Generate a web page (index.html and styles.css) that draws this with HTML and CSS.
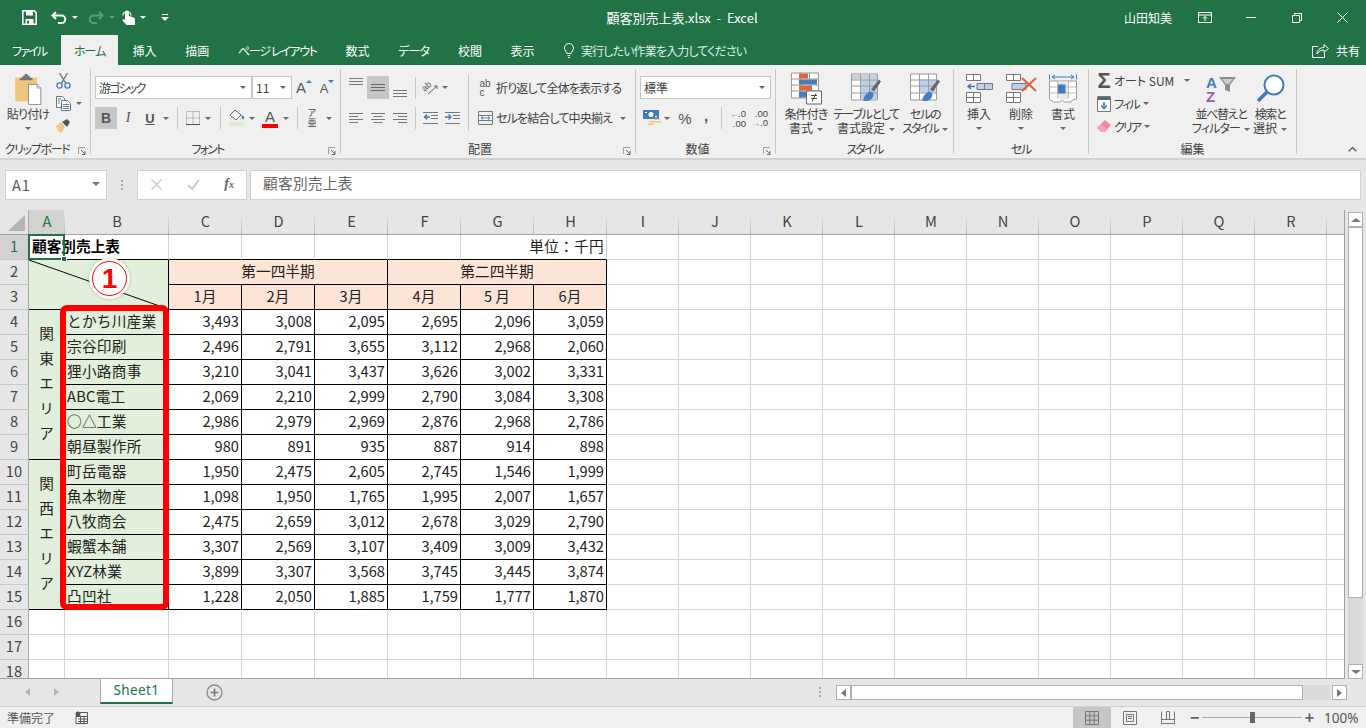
FILE: index.html
```html
<!DOCTYPE html>
<html lang="ja">
<head>
<meta charset="utf-8">
<title>顧客別売上表.xlsx - Excel</title>
<link rel="stylesheet" href="styles.css">
</head>
<body>
<div class="app">
<header class="titlebar">
  <div class="qat">
    <svg class="q-save" width="15" height="15" viewBox="0 0 15 15"><path d="M.8.8h11.4l2 2v11.4H.8z" fill="none" stroke="#fff" stroke-width="1.6"/><path d="M4 1h7v4.5H4zM3.5 9h8v5h-8z" fill="#fff"/><path d="M5 10.5h2v3H5z" fill="#217346"/></svg>
    <svg class="q-undo" width="16" height="14" viewBox="0 0 16 14"><path d="M5 1 1.5 4.5 5 8M2 4.5h8.500a3.800 3.800 0 0 1 0 7.600H7" fill="none" stroke="#fff" stroke-width="2"/></svg>
    <span class="cr-w q-c1"></span>
    <svg class="q-redo" width="16" height="14" viewBox="0 0 16 14"><path d="M11 1l3.500 3.500L11 8M14 4.500H5.500a3.800 3.800 0 0 0 0 7.600H9" fill="none" stroke="#5f9c7e" stroke-width="2"/></svg>
    <span class="cr-d q-c2"></span>
    <svg class="q-touch" width="16" height="17" viewBox="0 0 16 17"><path d="M5 7V3.500a2 2 0 0 1 4 0V7l4 1.200c1.500.5 2 1.200 2 2.300V16H6.500L2.500 11.500 3.500 10 5 11z" fill="#fff"/><path d="M3 6.500a4 4 0 1 1 8 0" fill="none" stroke="#fff" stroke-width="1.200"/></svg>
    <span class="cr-w q-c3"></span>
    <svg class="q-more" width="8" height="7" viewBox="0 0 8 7"><path d="M1 0h6v1H1zM0 3h8L4 7z" fill="#fff"/></svg>
  </div>
  <div class="doc-title">顧客別売上表.xlsx  -  Excel</div>
  <div class="win">
    <span class="user">山田知美</span>
    <svg class="w-disp" width="14" height="11" viewBox="0 0 14 11"><path d="M.5.500h13v10H.5zM.5 3h13" fill="none" stroke="#fff"/><path d="M7 9V4.500M5 6.500l2-2 2 2" fill="none" stroke="#fff"/></svg>
    <svg class="w-min" width="10" height="1" viewBox="0 0 10 1"><path d="M0 0h10v1H0z" fill="#fff"/></svg>
    <svg class="w-max" width="10" height="10" viewBox="0 0 10 10"><path d="M.5 2.500h7v7h-7zM2.500 2.500v-2h7v7h-2" fill="none" stroke="#fff"/></svg>
    <svg class="w-close" width="11" height="11" viewBox="0 0 11 11"><path d="M.5.500l10 10M10.500.500l-10 10" stroke="#fff" fill="none"/></svg>
  </div>
</header>

<nav class="tabs">
  <span class="tab first sp3">ファイル</span>
  <span class="tab on sp1">ホーム</span>
  <span class="tab">挿入</span>
  <span class="tab">描画</span>
  <span class="tab sp2">ページ レイアウト</span>
  <span class="tab">数式</span>
  <span class="tab sp1">データ</span>
  <span class="tab">校閲</span>
  <span class="tab">表示</span>
  <span class="tell">
    <svg width="10" height="15" viewBox="0 0 10 15"><path d="M3 10.500C2.500 8.500.5 7.500.5 5a4.500 4.500 0 0 1 9 0c0 2.500-2 3.500-2.500 5.500zM3.500 12.500h3M4 14.500h2" fill="none" stroke="#fff"/></svg>
    <span class="sp1">実行したい作業を入力してください</span>
  </span>
  <span class="share">
    <svg width="17" height="15" viewBox="0 0 17 15"><path d="M6 3.500H.5v11h12V10M5 11c0-4 3-6.500 7-6.500V1.500l4.500 4-4.500 4V7c-3 0-5 1-7 4z" fill="none" stroke="#fff"/></svg>
    <span>共有</span>
  </span>
</nav>

<section class="ribbon">
  <!-- clipboard -->
  <div class="g g-clip">
    <div class="g-body">
      <div class="big b-paste">
        <svg class="ico" width="30" height="36" viewBox="0 0 30 36"><path d="M1 6h24v26H1z" fill="#efc680"/><path d="M9 4h2a2 2 0 0 1 4 0h2v2l3 1v2H6V7l3-1z" fill="#767676"/><path d="M15.500 13.500H25l4 4v18H15.500z" fill="#fff" stroke="#8a8a8a"/><path d="M25 13.500v4h4" fill="none" stroke="#8a8a8a"/></svg>
        <span class="t sp1">貼り付け</span>
        <span class="cr"></span>
      </div>
      <div class="stack s-clip">
        <div class="srow"><span class="slot w20"><svg width="15" height="16" viewBox="0 0 15 16"><path d="M3.500 0l6 10M11.500 0l-6 10" stroke="#777" stroke-width="1.400" fill="none"/><circle cx="3.500" cy="12.500" r="2.600" fill="none" stroke="#3f7cbf" stroke-width="1.300"/><circle cx="11.500" cy="12.500" r="2.600" fill="none" stroke="#3f7cbf" stroke-width="1.300"/></svg></span></div>
        <div class="srow"><span class="slot w20"><svg width="15" height="15" viewBox="0 0 15 15"><path d="M.5.500h6l2 2v9H.5z" fill="#fff" stroke="#777"/><path d="M5.500 4.500h6l3 3v7h-9z" fill="#fff" stroke="#4a7ebb"/><path d="M7 8.500h6M7 10.500h6M7 12.500h6M2 3h3M2 5h2M2 7h2" stroke="#777" fill="none"/></svg></span><span class="slot w12 cr"></span></div>
        <div class="srow"><span class="slot w20"><svg width="16" height="15" viewBox="0 0 16 15"><path d="M0 8l6-5 4 5-4 6-2-1 1-2-2 1-1-1 1-2z" fill="#efc680"/><path d="M7 3l5-3 3 3-3 5z" fill="#555"/></svg></span></div>
      </div>
    </div>
    <div class="g-label lb sp2">クリップボード</div>
    <svg class="launch" width="8" height="8" viewBox="0 0 8 8"><path d="M.5 7V.5H7" fill="none" stroke="#a0a0a0"/><path d="M3 3l4 4M7 4v3.500H4" fill="none" stroke="#666"/></svg>
  </div>

  <!-- font -->
  <div class="g g-font">
    <div class="g-col pl4">
      <div class="row r1">
        <div class="sel s-face"><span class="grow sp3">游ゴシック</span><span class="slot w16 cr"></span></div>
        <div class="sel s-size"><span class="grow">11</span><span class="slot w16 cr"></span></div>
        <span class="slot w24 gl"><span class="aa aa-big">A</span><i class="tri up"></i></span>
        <span class="slot w22 gl"><span class="aa aa-sm">A</span><i class="tri dn"></i></span>
      </div>
      <div class="row r2">
        <span class="slot w22 act"><b class="gl-b">B</b></span>
        <span class="slot w22"><i class="gl-i">I</i></span>
        <span class="slot w22"><u class="gl-u">U</u></span>
        <span class="slot w10 cr"></span>
        <span class="slot w12"><i class="vs"></i></span>
        <span class="slot w20"><svg width="14" height="14" viewBox="0 0 14 14"><path d="M.5.500h13v13H.5zM7 .5v13M.5 7h13" fill="none" stroke="#888" stroke-dasharray="1 1"/><path d="M0 13.500h14" stroke="#555"/></svg></span>
        <span class="slot w10 cr"></span>
        <span class="slot w14"><i class="vs"></i></span>
        <span class="slot w20"><svg width="16" height="18" viewBox="0 0 16 18"><path d="M6 1l6 5-5 5-6-5z" fill="#fff" stroke="#666"/><path d="M12 6l3 1.500V10h-1.500z" fill="#3f7cbf"/><path d="M0 13h15v4H0z" fill="#dcebd2"/></svg></span>
        <span class="slot w10 cr"></span>
        <span class="slot w26 fcolor"><span class="fa">A</span><i class="fbar"></i></span>
        <span class="slot w6 cr"></span>
        <span class="slot w16"><i class="vs"></i></span>
        <span class="slot w14 phon">ア<br>亜</span>
        <span class="slot w20 cr"></span>
      </div>
    </div>
    <div class="g-label lb sp3">フォント</div>
    <svg class="launch" width="8" height="8" viewBox="0 0 8 8"><path d="M.5 7V.5H7" fill="none" stroke="#a0a0a0"/><path d="M3 3l4 4M7 4v3.500H4" fill="none" stroke="#666"/></svg>
  </div>

  <!-- alignment -->
  <div class="g g-align">
    <div class="g-body">
      <div class="g-col pl4 c-al">
        <div class="row r1b">
          <span class="slot w22 al-top"><svg width="14" height="7" viewBox="0 0 14 7"><path d="M0 .5h14M0 3.500h14M0 6.500h14" stroke="#777"/></svg></span>
          <span class="slot w22 act"><svg width="14" height="7" viewBox="0 0 14 7"><path d="M0 .5h14M0 3.500h14M0 6.500h14" stroke="#666"/></svg></span>
          <span class="slot w22 al-bot"><svg width="14" height="7" viewBox="0 0 14 7"><path d="M0 .5h14M0 3.500h14M0 6.500h14" stroke="#777"/></svg></span>
          <span class="slot w8"><i class="vs"></i></span>
          <span class="slot w22"><svg class="ov" width="17" height="15" viewBox="0 0 17 15"><text x="0" y="9" class="orient" transform="rotate(-40 5 7)">ab</text><path d="M6 14l9-8M15 6h-3M15 6v3" fill="none" stroke="#666"/></svg></span>
          <span class="slot w8 cr"></span>
        </div>
        <div class="row r2b">
          <span class="slot w22"><svg width="14" height="11" viewBox="0 0 14 11"><path d="M0 .5h14M0 3.500h9M0 6.500h14M0 9.500h9" stroke="#777"/></svg></span>
          <span class="slot w22"><svg width="14" height="11" viewBox="0 0 14 11"><path d="M0 .5h14M2.500 3.500h9M0 6.500h14M2.500 9.500h9" stroke="#777"/></svg></span>
          <span class="slot w22"><svg width="14" height="11" viewBox="0 0 14 11"><path d="M0 .5h14M5 3.500h9M0 6.500h14M5 9.500h9" stroke="#777"/></svg></span>
          <span class="slot w8"><i class="vs"></i></span>
          <span class="slot w22"><svg width="15" height="12" viewBox="0 0 15 12"><path d="M0 .5h15M8 3.500h7M8 6.500h7M0 11.500h15" stroke="#777"/><path d="M7 5H1M4 2.500L1.500 5 4 7.500" fill="none" stroke="#3f7cbf" stroke-width="1.300"/></svg></span>
          <span class="slot w22"><svg width="15" height="12" viewBox="0 0 15 12"><path d="M0 .5h15M8 3.500h7M8 6.500h7M0 11.500h15" stroke="#777"/><path d="M0 5h6M3.500 2.500L6 5 3.500 7.500" fill="none" stroke="#3f7cbf" stroke-width="1.300"/></svg></span>
        </div>
      </div>
      <i class="vsl"></i>
      <div class="g-col c-wrap">
        <div class="row r1b">
          <span class="slot w22"><span class="wrapic">ab<br>c</span></span>
          <span class="t sp1">折り返して全体を表示する</span>
        </div>
        <div class="row r2b">
          <span class="slot w22"><svg width="15" height="14" viewBox="0 0 15 14"><path d="M.5.500h14v13H.5zM.5 4.500h14M.5 9.500h14" fill="none" stroke="#777"/><path d="M.5 4.500h14v5H.5z" fill="#fff" stroke="#777"/><path d="M3 7h9M5 5.500L3 7l2 1.500M10 5.500L12 7l-2 1.500" fill="none" stroke="#3f7cbf"/></svg></span>
          <span class="t sp1">セルを結合して中央揃え</span>
          <span class="slot w22 cr"></span>
        </div>
      </div>
    </div>
    <div class="g-label lb">配置</div>
    <svg class="launch" width="8" height="8" viewBox="0 0 8 8"><path d="M.5 7V.5H7" fill="none" stroke="#a0a0a0"/><path d="M3 3l4 4M7 4v3.500H4" fill="none" stroke="#666"/></svg>
  </div>

  <!-- number -->
  <div class="g g-num">
    <div class="g-col pl4">
      <div class="row r1"><div class="sel s-fmt"><span class="grow">標準</span><span class="slot w16 cr"></span></div></div>
      <div class="row r2">
        <span class="slot w24"><svg width="18" height="16" viewBox="0 0 18 16"><path d="M0 0h16v9H0z" fill="#3f7cbf"/><circle cx="8" cy="4.500" r="2.500" fill="#fff"/><path d="M2 2h2v1H2zM12 6h2v1h-2z" fill="#fff"/><path d="M6 11h6v1.500H6zM5 13.500h6V15H5zM11 8.500h6V10h-6zM12 11h6v1.500h-6z" fill="#efc680"/></svg></span>
        <span class="slot w6 cr"></span>
        <span class="slot w30 pct">%</span>
        <span class="slot w12 cm">,</span>
        <span class="slot w18"><i class="vs"></i></span>
        <span class="slot w16 dec"><span><i class="arr">←</i>.0</span><span>.00</span></span>
        <span class="slot w22 dec"><span>.00</span><span><i class="arr">→</i>.0</span></span>
      </div>
    </div>
    <div class="g-label lb">数値</div>
    <svg class="launch" width="8" height="8" viewBox="0 0 8 8"><path d="M.5 7V.5H7" fill="none" stroke="#a0a0a0"/><path d="M3 3l4 4M7 4v3.500H4" fill="none" stroke="#666"/></svg>
  </div>

  <!-- styles -->
  <div class="g g-style">
    <div class="g-body">
      <div class="big w60">
        <svg class="ico" width="31" height="32" viewBox="0 0 31 32"><path d="M.5.500h27v25H.5zM9.500.500v25M18.500.500v25M.5 6.500h27M.5 12.500h27M.5 18.500h27" fill="#fff" stroke="#9a9a9a"/><path d="M8 1h9v5H8z" fill="#e0643c"/><path d="M8 7h18v5H8z" fill="#4a7ebb"/><path d="M8 13h13v5H8z" fill="#e0643c"/><path d="M8 19h9v6H8z" fill="#4a7ebb"/><path d="M15.500 18.500h15v13h-15z" fill="#fff" stroke="#666"/><path d="M20 23h6M20 26h6M25 21l-4 8" stroke="#444" fill="none"/></svg>
        <span class="t sp1">条件付き</span>
        <span class="t">書式<i class="cr il"></i></span>
      </div>
      <div class="big w60">
        <svg class="ico" width="30" height="32" viewBox="0 0 30 32"><path d="M.5 1.500h26v26H.5z" fill="#fff" stroke="#9a9a9a"/><path d="M1 2h25v5H1z" fill="#c7d2df"/><path d="M9 7h17v20H9z" fill="#bcd0e8"/><path d="M.5 7.500h26M.5 13.500h26M.5 20.500h26M9.500 1.500v26M18.500 1.500v26" stroke="#9a9a9a" fill="none"/><path d="M20 17l8-10 2 2-7 10z" fill="#666"/><path d="M12 28c1-5 5-9 8-9 3 1 3 4 1 7-3 3-6 3-9 2z" fill="#4a7ebb"/></svg>
        <span class="t sp2">テーブルとして</span>
        <span class="t">書式設定<i class="cr il"></i></span>
      </div>
      <div class="big w58">
        <svg class="ico" width="30" height="32" viewBox="0 0 30 32"><path d="M.5 1.500h26v26H.5z" fill="#fff" stroke="#9a9a9a"/><path d="M9 7h17v13H9z" fill="#bcd0e8"/><path d="M.5 7.500h26M.5 13.500h26M.5 20.500h26M9.500 1.500v26M18.500 1.500v26" stroke="#9a9a9a" fill="none"/><path d="M20 17l8-10 2 2-7 10z" fill="#666"/><path d="M12 28c1-5 5-9 8-9 3 1 3 4 1 7-3 3-6 3-9 2z" fill="#4a7ebb"/></svg>
        <span class="t sp2">セルの</span>
        <span class="t sp3">スタイル<i class="cr il"></i></span>
      </div>
    </div>
    <div class="g-label sp3">スタイル</div>
  </div>

  <!-- cells -->
  <div class="g g-cell">
    <div class="g-body pl4">
      <div class="big w42">
        <svg class="ico" width="27" height="29" viewBox="0 0 27 29"><path d="M.5.500h14v6H.5zM7.500.500v6M.5 18.500h14v10H.5zM7.500 18.500v10M.5 23.500h14" fill="#fff" stroke="#777"/><path d="M11 9.500h15.500v6H11zM18.500 9.500v6" fill="#bcd0e8" stroke="#777"/><path d="M9 12.500H2M5 10L2 12.500 5 15" fill="none" stroke="#3f7cbf" stroke-width="1.500"/></svg>
        <span class="t">挿入</span>
        <span class="cr mt6"></span>
      </div>
      <div class="big w42">
        <svg class="ico" width="31" height="29" viewBox="0 0 31 29"><path d="M.5.500h14v6H.5zM7.500.500v6M.5 18.500h14v10H.5zM7.500 18.500v10M.5 23.500h14" fill="#fff" stroke="#777"/><path d="M6 9.500h14v6H6z" fill="#bcd0e8" stroke="#777"/><path d="M16 4l14 13M30 4L16 17" stroke="#e0643c" stroke-width="2.200" fill="none"/></svg>
        <span class="t">削除</span>
        <span class="cr mt6"></span>
      </div>
      <div class="big w42">
        <svg class="ico" width="28" height="30" viewBox="0 0 28 30"><path d="M.5 1v5M27.500 1v5M3 3.500h22M6 1.500l-3 2 3 2M22 1.500l3 2-3 2" fill="none" stroke="#3f7cbf"/><path d="M.5 7.500h27v18l-4 1-2 2h-6l-2-2-3 2h-6l-4-3z" fill="#fff" stroke="#999"/><path d="M8 8h12v18H8z" fill="#eaeaea"/><path d="M8.500 7.500v17M19.500 7.500v17M.5 13.500h27M.5 19.500h27" stroke="#bbb" fill="none"/><path d="M9 11h7.500v9H9z" fill="#3f7cbf"/></svg>
        <span class="t">書式</span>
        <span class="cr mt6"></span>
      </div>
    </div>
    <div class="g-label sp2">セル</div>
  </div>

  <!-- editing -->
  <div class="g g-edit">
    <div class="g-body">
      <div class="stack s-edit">
        <div class="srow"><span class="slot w20"><span class="sigma">Σ</span></span><span class="t">オート SUM</span><span class="slot w26 cr"></span></div>
        <div class="srow"><span class="slot w20"><svg width="14" height="16" viewBox="0 0 14 16"><path d="M.5.500h13v15H.5z" fill="#fff" stroke="#777"/><path d="M1 1h12v3H1z" fill="#666"/><path d="M7 6v6M4 9.500l3 3 3-3" fill="none" stroke="#3f7cbf" stroke-width="1.600"/></svg></span><span class="t sp3">フィル</span><span class="slot w14 cr"></span></div>
        <div class="srow"><span class="slot w20"><svg width="14" height="13" viewBox="0 0 14 13"><path d="M8 0l6 5-6 7H4L0 8z" fill="#ea8a9c"/><path d="M0 8l4-4 6 5-3 3H4z" fill="#f0a9b6"/></svg></span><span class="t sp3">クリア</span><span class="slot w14 cr"></span></div>
      </div>
      <div class="big w60">
        <svg class="ico" width="31" height="29" viewBox="0 0 31 29"><path d="M13 3h17l-6 8v7l-5-2v-5z" fill="#8d8d8d"/><path d="M16 5h11l-4 5h-3z" fill="#ccc"/><text x="0" y="14" class="az a">A</text><text x="0" y="28" class="az z">Z</text></svg>
        <span class="t sp2">並べ替えと</span>
        <span class="t sp1">フィルター<i class="cr il"></i></span>
      </div>
      <div class="big w38">
        <svg class="ico" width="29" height="29" viewBox="0 0 29 29"><circle cx="18" cy="11" r="9.500" fill="#fff" stroke="#3f7cbf" stroke-width="2"/><path d="M11 18L2 27" stroke="#3f7cbf" stroke-width="3.500"/></svg>
        <span class="t sp2">検索と</span>
        <span class="t">選択<i class="cr il"></i></span>
      </div>
    </div>
    <div class="g-label">編集</div>
  </div>
  <svg class="collapse" width="9" height="6" viewBox="0 0 9 6"><path d="M.7 5.300l3.800-3.800 3.800 3.800" fill="none" stroke="#666" stroke-width="1.500"/></svg>
</section>

<section class="fbar-row">
  <div class="namebox"><span class="grow">A1</span><svg width="8" height="4" viewBox="0 0 8 4"><path d="M0 0h8L4 4z" fill="#777"/></svg></div>
  <div class="dots"><i></i><i></i><i></i></div>
  <div class="fxbox">
    <svg width="11" height="11" viewBox="0 0 11 11"><path d="M.5.500l10 10M10.500.500l-10 10" stroke="#c8c8c8" stroke-width="1.300"/></svg>
    <svg width="13" height="11" viewBox="0 0 13 11"><path d="M1 6l4 4 7-9" fill="none" stroke="#c8c8c8" stroke-width="1.800"/></svg>
    <span class="fx">f<small>x</small></span>
  </div>
  <div class="finput">顧客別売上表</div>
</section>

<section class="sheet-row">
  <div class="sheet">
    <table class="grid">
      <colgroup>
        <col class="c-rh"><col class="c-a"><col class="c-b">
        <col class="c-d"><col class="c-d"><col class="c-d"><col class="c-d"><col class="c-d"><col class="c-d">
        <col class="c-e"><col class="c-e"><col class="c-e"><col class="c-e"><col class="c-e"><col class="c-e"><col class="c-e"><col class="c-e"><col class="c-e"><col class="c-e"><col class="c-s">
      </colgroup>
      <thead>
        <tr>
          <th class="corner"><svg width="17" height="16" viewBox="0 0 17 16"><path d="M17 0v16H0z" fill="#b4b4b4"/></svg></th>
          <th class="ch on">A</th><th class="ch">B</th><th class="ch">C</th><th class="ch">D</th><th class="ch">E</th><th class="ch">F</th><th class="ch">G</th><th class="ch">H</th><th class="ch">I</th><th class="ch">J</th><th class="ch">K</th><th class="ch">L</th><th class="ch">M</th><th class="ch">N</th><th class="ch">O</th><th class="ch">P</th><th class="ch">Q</th><th class="ch">R</th><th class="ch"></th>
        </tr>
      </thead>
      <tbody>
        <tr><th class="rh on">1</th><td colspan="2" class="kb title">顧客別売上表</td><td class="kb"></td><td class="kb"></td><td class="kb"></td><td class="kb"></td><td colspan="2" class="kb r unit">単位：千円</td><td></td><td></td><td></td><td></td><td></td><td></td><td></td><td></td><td></td><td></td><td></td></tr>
        <tr><th class="rh">2</th><td colspan="2" rowspan="2" class="k gr diag"><svg class="diagline" viewBox="0 0 140 50" preserveAspectRatio="none"><path d="M0 0L140 50" stroke="#000" fill="none"/></svg></td><td colspan="3" class="k or c">第一四半期</td><td colspan="3" class="k or c">第二四半期</td><td></td><td></td><td></td><td></td><td></td><td></td><td></td><td></td><td></td><td></td><td></td></tr>
        <tr><th class="rh">3</th><td class="k or c">1月</td><td class="k or c">2月</td><td class="k or c">3月</td><td class="k or c">4月</td><td class="k or c">5 月</td><td class="k or c">6月</td><td></td><td></td><td></td><td></td><td></td><td></td><td></td><td></td><td></td><td></td><td></td></tr>
        <tr><th class="rh">4</th><td rowspan="6" class="k gr vert"><span>関東エリア</span></td><td class="k gr">とかち川産業</td><td class="k r">3,493</td><td class="k r">3,008</td><td class="k r">2,095</td><td class="k r">2,695</td><td class="k r">2,096</td><td class="k r">3,059</td><td></td><td></td><td></td><td></td><td></td><td></td><td></td><td></td><td></td><td></td><td></td></tr>
        <tr><th class="rh">5</th><td class="k gr">宗谷印刷</td><td class="k r">2,496</td><td class="k r">2,791</td><td class="k r">3,655</td><td class="k r">3,112</td><td class="k r">2,968</td><td class="k r">2,060</td><td></td><td></td><td></td><td></td><td></td><td></td><td></td><td></td><td></td><td></td><td></td></tr>
        <tr><th class="rh">6</th><td class="k gr">狸小路商事</td><td class="k r">3,210</td><td class="k r">3,041</td><td class="k r">3,437</td><td class="k r">3,626</td><td class="k r">3,002</td><td class="k r">3,331</td><td></td><td></td><td></td><td></td><td></td><td></td><td></td><td></td><td></td><td></td><td></td></tr>
        <tr><th class="rh">7</th><td class="k gr">ABC電工</td><td class="k r">2,069</td><td class="k r">2,210</td><td class="k r">2,999</td><td class="k r">2,790</td><td class="k r">3,084</td><td class="k r">3,308</td><td></td><td></td><td></td><td></td><td></td><td></td><td></td><td></td><td></td><td></td><td></td></tr>
        <tr><th class="rh">8</th><td class="k gr">○△工業</td><td class="k r">2,986</td><td class="k r">2,979</td><td class="k r">2,969</td><td class="k r">2,876</td><td class="k r">2,968</td><td class="k r">2,786</td><td></td><td></td><td></td><td></td><td></td><td></td><td></td><td></td><td></td><td></td><td></td></tr>
        <tr><th class="rh">9</th><td class="k gr">朝昼製作所</td><td class="k r">980</td><td class="k r">891</td><td class="k r">935</td><td class="k r">887</td><td class="k r">914</td><td class="k r">898</td><td></td><td></td><td></td><td></td><td></td><td></td><td></td><td></td><td></td><td></td><td></td></tr>
        <tr><th class="rh">10</th><td rowspan="6" class="k gr vert"><span>関西エリア</span></td><td class="k gr">町岳電器</td><td class="k r">1,950</td><td class="k r">2,475</td><td class="k r">2,605</td><td class="k r">2,745</td><td class="k r">1,546</td><td class="k r">1,999</td><td></td><td></td><td></td><td></td><td></td><td></td><td></td><td></td><td></td><td></td><td></td></tr>
        <tr><th class="rh">11</th><td class="k gr">魚本物産</td><td class="k r">1,098</td><td class="k r">1,950</td><td class="k r">1,765</td><td class="k r">1,995</td><td class="k r">2,007</td><td class="k r">1,657</td><td></td><td></td><td></td><td></td><td></td><td></td><td></td><td></td><td></td><td></td><td></td></tr>
        <tr><th class="rh">12</th><td class="k gr">八牧商会</td><td class="k r">2,475</td><td class="k r">2,659</td><td class="k r">3,012</td><td class="k r">2,678</td><td class="k r">3,029</td><td class="k r">2,790</td><td></td><td></td><td></td><td></td><td></td><td></td><td></td><td></td><td></td><td></td><td></td></tr>
        <tr><th class="rh">13</th><td class="k gr">蝦蟹本舗</td><td class="k r">3,307</td><td class="k r">2,569</td><td class="k r">3,107</td><td class="k r">3,409</td><td class="k r">3,009</td><td class="k r">3,432</td><td></td><td></td><td></td><td></td><td></td><td></td><td></td><td></td><td></td><td></td><td></td></tr>
        <tr><th class="rh">14</th><td class="k gr">XYZ林業</td><td class="k r">3,899</td><td class="k r">3,307</td><td class="k r">3,568</td><td class="k r">3,745</td><td class="k r">3,445</td><td class="k r">3,874</td><td></td><td></td><td></td><td></td><td></td><td></td><td></td><td></td><td></td><td></td><td></td></tr>
        <tr><th class="rh">15</th><td class="k gr">凸凹社</td><td class="k r">1,228</td><td class="k r">2,050</td><td class="k r">1,885</td><td class="k r">1,759</td><td class="k r">1,777</td><td class="k r">1,870</td><td></td><td></td><td></td><td></td><td></td><td></td><td></td><td></td><td></td><td></td><td></td></tr>
        <tr><th class="rh">16</th><td></td><td></td><td></td><td></td><td></td><td></td><td></td><td></td><td></td><td></td><td></td><td></td><td></td><td></td><td></td><td></td><td></td><td></td><td></td></tr>
        <tr><th class="rh">17</th><td></td><td></td><td></td><td></td><td></td><td></td><td></td><td></td><td></td><td></td><td></td><td></td><td></td><td></td><td></td><td></td><td></td><td></td><td></td></tr>
        <tr><th class="rh">18</th><td></td><td></td><td></td><td></td><td></td><td></td><td></td><td></td><td></td><td></td><td></td><td></td><td></td><td></td><td></td><td></td><td></td><td></td><td></td></tr>
      </tbody>
    </table>
    <div class="selbox"><i class="handle"></i></div>
    <div class="redbox"></div>
    <div class="badge"><span>1</span></div>
  </div>
  <aside class="vscroll">
    <span class="sbtn"><i class="ar-up"></i></span>
    <span class="thumb-v"></span>
    <span class="track"></span>
    <span class="sbtn"><i class="ar-dn"></i></span>
  </aside>
</section>

<section class="sheetbar">
  <span class="nav"><i class="ar-l"></i></span>
  <span class="nav nav2"><i class="ar-r"></i></span>
  <span class="stab">Sheet1</span>
  <svg class="addsheet" width="17" height="17" viewBox="0 0 17 17"><circle cx="8.500" cy="8.500" r="7.500" fill="none" stroke="#8a8a8a" stroke-width="1.300"/><path d="M4.500 8.500h8M8.500 4.500v8" stroke="#777" stroke-width="1.600"/></svg>
  <span class="grow"></span>
  <div class="dots dots-h"><i></i><i></i><i></i></div>
  <div class="hscroll">
    <span class="sbtn"><i class="ar-l"></i></span>
    <span class="thumb-h"></span>
    <span class="track"></span>
    <span class="sbtn"><i class="ar-r"></i></span>
  </div>
</section>

<footer class="status">
  <span class="ready">準備完了</span>
  <svg class="macro" width="13" height="13" viewBox="0 0 13 13"><circle cx="3" cy="3" r="2.500" fill="#555"/><path d="M1 5.500h11.500v7H1z" fill="#fff" stroke="#555"/><path d="M5 1.500h7.500v4M3 8h9M3 10.500h9M5.500 5.500v7M9 5.500v7" stroke="#555" fill="none"/></svg>
  <span class="grow"></span>
  <span class="vbtn on"><svg width="14" height="14" viewBox="0 0 14 14"><path d="M.5.500h13v13H.5zM4.830.5v13M9.170.5v13M.5 4.830h13M.5 9.170h13" fill="none" stroke="#777"/></svg></span>
  <span class="vbtn"><svg width="14" height="14" viewBox="0 0 14 14"><path d="M.5.500h13v13H.5zM3.500 3.500h7v7h-7zM5 5.500h4M5 7.500h4" fill="none" stroke="#777"/></svg></span>
  <span class="vbtn"><svg width="14" height="13" viewBox="0 0 14 13"><path d="M.5.500v12h13V.5M.5 8.500h13M5.500.5v8M8.500.5v8M5.500.5h3" fill="none" stroke="#777"/></svg></span>
  <span class="zbtn">−</span>
  <span class="slider"><i></i></span>
  <span class="zbtn">+</span>
  <span class="zoomv">100%</span>
</footer>
</div>
</body>
</html>
```
FILE: styles.css
```css
* { box-sizing: border-box; }
html, body { margin: 0; padding: 0; }
body {
  font-family: "Noto Sans CJK JP", "Noto Sans", sans-serif;
  font-size: 12px;
  color: #333;
  background: #e6e6e6;
  overflow: hidden;
}
i { font-style: normal; }
.app { width: 1366px; height: 728px; display: flex; flex-direction: column; overflow: hidden; }
.grow { flex: 1 1 auto; }
.sp1 { letter-spacing: -.85px; }
.sp2 { letter-spacing: -1.3px; }
.sp3 { letter-spacing: -1.8px; }
.ov { overflow: visible; }

/* title bar */
.titlebar {
  height: 35px; background: #217346; color: #fff;
  display: grid; grid-template-columns: 1fr auto 1fr; align-items: center;
  flex: none;
}
.qat { display: flex; align-items: center; padding-left: 22px; height: 35px; }
.q-undo { margin-left: 14px; }
.cr-w, .cr-d { border: 3px solid transparent; border-bottom: 0; margin-left: 5px; }
.cr-w { border-top-color: #fff; }
.cr-d { border-top-color: #5f9c7e; }
.q-redo { margin-left: 10px; }
.q-touch { margin-left: 5px; }
.q-c3 { margin-left: 4px; }
.q-more { margin-left: 15px; }
.doc-title { white-space: pre; font-size: 13px; transform: translateX(-1px); }
.win { display: flex; align-items: center; justify-content: flex-end; height: 35px; }
.user { margin-right: 26px; }
.w-disp { margin-right: 34px; }
.w-min { margin-right: 36px; }
.w-max { margin-right: 35px; }
.w-close { margin-right: 18px; }

/* tabs */
.tabs {
  height: 30px; background: #217346; color: #fff; flex: none;
  display: flex; align-items: stretch;
  font-feature-settings: "palt";
  font-size: 12px;
}
.tab { padding: 0 14.35px; display: flex; align-items: center; white-space: pre; }
.tab.first { padding: 0 15px 0 12px; }
.tab.on { background: #f0f0f0; color: #217346; padding: 0 12.5px; }
.tell { display: flex; align-items: center; gap: 7px; margin-left: 15px; color: #dfeee6; }
.share { margin-left: auto; display: flex; align-items: center; gap: 7px; padding-right: 6px; }

/* ribbon */
.ribbon {
  height: 95px; background: #f0f0f0; border-bottom: 2px solid #d2d2d2; padding-top: 4px;
  display: flex; position: relative; flex: none;
  font-feature-settings: "palt";
  color: #404040;
}
.g { height: 85px; border-right: 1px solid #c8c8c8; position: relative; flex: none; }
.g-clip { width: 91px; }
.g-font { width: 250px; }
.g-align { width: 295px; }
.g-num { width: 140px; }
.g-style { width: 178px; }
.g-cell { width: 135px; }
.g-edit { width: 208px; }
.g-body { height: 73px; display: flex; }
.g-col { display: flex; flex-direction: column; }
.pl4 { padding-left: 4px; }
.g-label { position: absolute; left: 0; right: 0; bottom: -3px; text-align: center; line-height: 16px; white-space: nowrap; }
.g-label.lb { padding-right: 16px; }
.launch { position: absolute; right: 4px; bottom: -1px; }
.collapse { position: absolute; right: 9px; bottom: 6px; }

.row { display: flex; align-items: center; height: 22px; }
.r1 { margin-top: 7px; }
.r2 { margin-top: 9px; }
.r1b { margin-top: 7px; height: 23px; }
.r2b { margin-top: 8px; }
.slot { display: flex; align-items: center; justify-content: center; flex: none; height: 22px; }
.r1b .slot { height: 23px; }
.w6 { width: 6px; } .w8 { width: 8px; } .w10 { width: 10px; } .w12 { width: 12px; } .w14 { width: 14px; }
.w16 { width: 16px; } .w18 { width: 18px; } .w20 { width: 20px; } .w22 { width: 22px; } .w24 { width: 24px; }
.w26 { width: 26px; } .w30 { width: 30px; } .w38 { width: 38px; } .w42 { width: 42px; } .w58 { width: 58px; } .w60 { width: 60px; }
.act { background: #c6c6c6; }
.vs { display: block; width: 1px; height: 22px; background: #c8c8c8; }
.vsl { display: block; width: 1px; height: 56px; margin: 6px 4px 0 3px; background: #c8c8c8; flex: none; }
.cr::after {
  content: ""; display: block; width: 0; height: 0;
  border: 3px solid transparent; border-bottom: 0; border-top-color: #666;
}
.cr.il { display: inline-block; margin-left: 4px; vertical-align: 2px; }
.t { white-space: nowrap; line-height: 14px; }
.big { display: flex; flex-direction: column; align-items: center; flex: none; }
.big .ico { height: 33px; margin-top: 3px; margin-bottom: 2px; flex: none; }
.big > .cr { margin-top: 6px; }
.mt6 { margin-top: 6px; }
.b-paste { width: 54px; padding-left: 2px; }
.stack { display: flex; flex-direction: column; }
.srow { display: flex; align-items: center; height: 23px; }
.s-clip { margin-left: -1px; }
.s-edit { width: 102px; padding-left: 5px; }
.s-edit .slot { height: 23px; }

.sel { height: 23px; background: #fff; border: 1px solid #c6c6c6; display: flex; align-items: center; padding-left: 3px; flex: none; white-space: nowrap; }
.s-face { width: 157px; }
.s-size { width: 40px; }
.s-fmt { width: 131px; }
.gl { position: relative; }
.aa { font-family: "Liberation Sans", sans-serif; color: #555; }
.aa-big { font-size: 15px; margin-right: 2px; }
.aa-sm { font-size: 13px; margin-right: 2px; margin-top: 2px; }
.tri { border: 3px solid transparent; margin-left: -2px; }
.tri.up { border-top: 0; border-bottom-color: #3f7cbf; margin-top: -12px; }
.tri.dn { border-bottom: 0; border-top-color: #3f7cbf; margin-top: -12px; }
.gl-b, .gl-i, .gl-u { font-family: "Liberation Sans", sans-serif; font-size: 14px; color: #555; }
.gl-b { font-weight: 700; }
.gl-i { font-family: "Liberation Serif", serif; font-style: italic; }
.gl-u { font-weight: 700; font-size: 13px; }
.fcolor { flex-direction: column; }
.fa { font-family: "Liberation Sans", sans-serif; font-size: 15px; line-height: 15px; color: #555; }
.fbar { display: block; width: 16px; height: 4px; background: #f00; }
.phon { display: block; font-size: 9px; line-height: 10px; text-align: center; color: #444; padding-top: 1px; }
.orient { font-family: "Liberation Sans", sans-serif; font-size: 9px; fill: #555; }
.c-al { width: 124px; }
.c-wrap { padding-left: 1px; }
.al-top svg { transform: translateY(-6px); }
.al-bot svg { transform: translateY(6px); }
.wrapic { font-family: "Liberation Sans", sans-serif; font-size: 10px; line-height: 9px; color: #555; text-align: left; }
.pct { font-family: "Liberation Sans", sans-serif; font-size: 15px; color: #555; }
.cm { font-family: "Liberation Sans", sans-serif; font-size: 15px; font-weight: 700; color: #555; padding-bottom: 5px; }
.dec { font-family: "Liberation Sans", sans-serif; font-size: 9.5px; line-height: 9px; color: #444; flex-direction: column; align-items: flex-end; white-space: nowrap; }
.arr { color: #3f7cbf; font-weight: 700; font-size: 8px; }
.sigma { font-family: "Liberation Sans", sans-serif; font-size: 22px; font-weight: 700; color: #555; line-height: 19px; }
.az { font-family: "Liberation Sans", sans-serif; font-size: 15px; font-weight: 700; }
.az.a { fill: #3f7cbf; }
.az.z { fill: #8e5fb5; }

/* formula bar */
.fbar-row { height: 50px; flex: none; padding: 10px 5px 0 5px; display: flex; background: #e6e6e6; }
.namebox { width: 102px; height: 30px; background: #fff; border: 1px solid #d2d2d2; display: flex; align-items: center; padding: 0 6px 2px; font-size: 14.5px; color: #555; letter-spacing: 1px; flex: none; }
.dots { width: 30px; display: flex; flex-direction: column; align-items: center; justify-content: center; gap: 2px; height: 30px; flex: none; }
.dots i { width: 2px; height: 2px; background: #a8a8a8; display: block; }
.fxbox { width: 110px; height: 30px; background: #fff; border: 1px solid #d2d2d2; display: flex; align-items: center; justify-content: space-between; padding: 0 12px 2px 13px; flex: none; }
.fx { font-family: "Liberation Serif", serif; font-style: italic; font-weight: 700; font-size: 14px; color: #666; }
.fx small { font-size: 10px; }
.finput { flex: 1; margin-left: 3px; height: 30px; background: #fff; border: 1px solid #d2d2d2; padding-left: 12px; line-height: 24px; font-size: 14.67px; color: #666; letter-spacing: .3px; }

/* sheet */
.sheet-row { flex: none; height: 469px; display: flex; }
.sheet { width: 1345px; height: 469px; overflow: hidden; position: relative; background: #fff; border-right: 1px solid #a0a0a0; border-bottom: 1px solid #a0a0a0; flex: none; }
.grid { border-collapse: separate; border-spacing: 0; table-layout: fixed; width: 1345px; font-size: 14.67px; color: #222; }
.c-rh { width: 29px; } .c-a { width: 36px; } .c-b { width: 104px; } .c-d { width: 73px; } .c-e { width: 72px; } .c-s { width: 18px; }
.grid tr { height: 25px; }
.grid th, .grid td { height: 25px; padding: 0; font-weight: 400; white-space: nowrap; overflow: hidden; }
.grid th { padding-bottom: 3px; }
.grid td { border-right: 1px solid #d4d4d4; border-bottom: 1px solid #d4d4d4; padding: 0 2px 2px 2px; line-height: 22px; }
.corner { background: #e6e6e6; border-right: 1px solid #a8a8a8; border-bottom: 1px solid #a0a0a0; vertical-align: top; }
.corner svg { display: block; margin: 5px 3px 0 auto; }
.ch { background: #e6e6e6; color: #444; text-align: center; border-bottom: 1px solid #a0a0a0; background-image: linear-gradient(#e6e6e6 20%, #b4b4b4); background-size: 1px 100%; background-repeat: no-repeat; background-position: right top; }
.rh { background: #e6e6e6; color: #444; text-align: center; border-right: 1px solid #a8a8a8; border-bottom: 1px solid #c8c8c8; }
.ch.on, .rh.on { background-color: #d2d2d2; color: #217346; }
.grid td.k { border-right-color: #000; border-bottom-color: #000; }
.grid td.kb { border-bottom-color: #000; }
.grid td.gr { background: #e2efda; letter-spacing: .25px; }
.or { background: #fce4d6; }
.r { text-align: right; }
.c { text-align: center; }
.grid td.title { font-weight: 700; color: #000; padding-left: 3px; letter-spacing: 0; }
.grid td.unit { letter-spacing: .3px; }
.grid td.diag { position: relative; padding: 0; }
.diagline { position: absolute; inset: 0; width: 100%; height: 100%; display: block; }
.grid td.vert { text-align: center; padding: 12px 0 0; letter-spacing: 0; }
.vert span { writing-mode: vertical-rl; letter-spacing: 10.3px; display: inline-block; line-height: 35px; }

.selbox { position: absolute; left: 28px; top: 24px; width: 37px; height: 26px; border: 2px solid #217346; }
.handle { position: absolute; right: -4px; bottom: -4px; background: #217346; border: 1px solid #fff; box-sizing: content-box; width: 4px; height: 4px; }
.redbox { position: absolute; left: 60px; top: 95px; width: 109px; height: 305px; border: 6px solid #f00; border-radius: 7px; }
.badge {
  position: absolute; left: 89px; top: 48px; width: 41px; height: 41px; border-radius: 50%;
  background: #fff; box-shadow: 0 0 3px rgba(0,0,0,.25);
  display: flex; align-items: center; justify-content: center;
}
.badge::before { content: ""; position: absolute; inset: 3px; border: 1px solid #f00; border-radius: 50%; }
.badge span { font-family: "Liberation Sans", sans-serif; font-weight: 700; font-size: 28px; line-height: 28px; color: #f00; }

.vscroll { width: 21px; display: flex; flex-direction: column; padding: 2px 3px 0 3px; background: #e6e6e6; flex: none; }
.sbtn { width: 15px; height: 15px; background: #fff; border: 1px solid #b0b0b0; display: flex; align-items: center; justify-content: center; flex: none; }
.thumb-v { height: 371px; background: #fff; border: 1px solid #b0b0b0; flex: none; }
.track { flex: 1; background: #dadada; }
.ar-up { border: 4px solid transparent; border-top: 0; border-bottom-color: #777; border-left-width: 5px; border-right-width: 5px; }
.ar-dn { border: 4px solid transparent; border-bottom: 0; border-top-color: #777; border-left-width: 5px; border-right-width: 5px; }
.ar-l { border: 5px solid transparent; border-left: 0; border-right-color: #777; border-top-width: 4px; border-bottom-width: 4px; }
.ar-r { border: 5px solid transparent; border-right: 0; border-left-color: #777; border-top-width: 4px; border-bottom-width: 4px; }

/* sheet tabs */
.sheetbar { height: 27px; flex: none; display: flex; align-items: flex-start; background: #e6e6e6; position: relative; }
.nav { display: flex; align-items: center; height: 26px; margin-left: 25px; width: 8px; opacity: .45; }
.nav2 { margin-left: 21px; }
.stab { margin-left: 38px; width: 73px; height: 25px; background: #fff; border-left: 1px solid #a8a8a8; border-right: 1px solid #a8a8a8; border-bottom: 2px solid #217346; color: #217346; text-align: center; line-height: 23px; font-size: 13.5px; letter-spacing: .4px; font-family: "Noto Sans", sans-serif; }
.addsheet { margin: 5px 0 0 33px; }
.dots-h { width: 6px; height: 26px; margin-right: 13px; }
.hscroll { display: flex; width: 511px; height: 15px; margin: 6px 19px 0 0; }
.thumb-h { width: 452px; margin-left: 0; background: #fff; border: 1px solid #b0b0b0; flex: none; }
.hscroll .track { margin-right: 2px; }

/* status bar */
.status { height: 22px; flex: none; background: #f0f0f0; border-top: 1px solid #d0d0d0; display: flex; align-items: center; color: #555; }
.ready { margin-left: 7px; }
.macro { margin-left: 20px; }
.vbtn { width: 38px; height: 21px; display: flex; align-items: center; justify-content: center; flex: none; }
.vbtn.on { background: #c6c6c6; }
.zbtn { width: 15px; text-align: center; font-size: 16px; font-weight: 700; color: #666; flex: none; line-height: 20px; font-family: "Liberation Sans", sans-serif; }
.slider { width: 100px; height: 1px; background: #a8a8a8; position: relative; flex: none; }
.slider i { position: absolute; left: 48px; top: -5px; width: 5px; height: 11px; background: #666; }
.zoomv { width: 41px; margin-left: 7px; margin-right: 1px; font-size: 13.5px; font-family: "Noto Sans", sans-serif; color: #555; white-space: nowrap; }
```
